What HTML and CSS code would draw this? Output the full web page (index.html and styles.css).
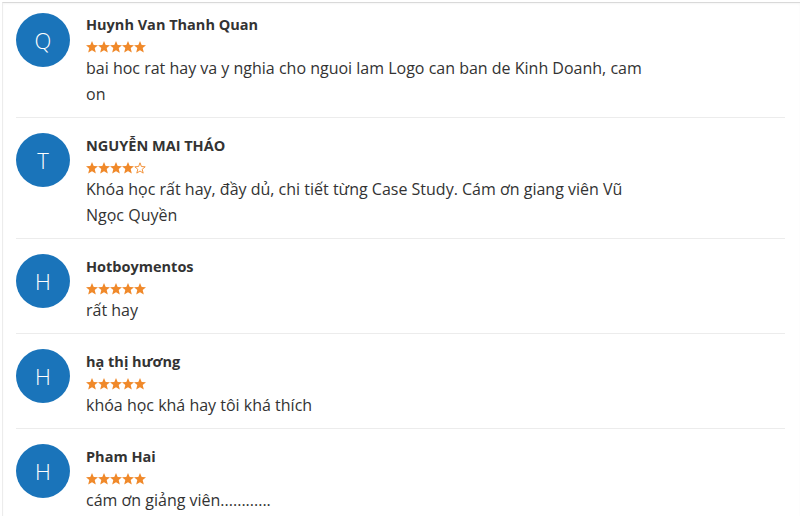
FILE: index.html
```html
<!DOCTYPE html>
<html lang="vi">
<head>
<meta charset="utf-8">
<title>Đánh giá</title>
<link rel="stylesheet" href="styles.css">
</head>
<body>
<svg width="0" height="0" class="defs">
  <defs>
    <symbol id="star" viewBox="0 0 12 12"><polygon points="6,0 7.7,4 12,4.3 8.7,7.1 9.8,11.6 6,9.2 2.2,11.6 3.3,7.1 0,4.3 4.3,4" fill="#f0892a"/></symbol>
    <symbol id="star-o" viewBox="0 0 12 12"><polygon points="6,0.8 7.4,4.5 11.2,4.8 8.2,7.3 9.2,11.1 6,9 2.8,11.1 3.8,7.3 0.8,4.8 4.6,4.5" fill="none" stroke="#f0892a" stroke-width="0.9" stroke-linejoin="round"/></symbol>
  </defs>
</svg>
<div class="reviews">
  <div class="review">
    <div class="avatar">Q</div>
    <div class="body">
      <div class="name">Huynh Van Thanh Quan</div>
      <div class="stars"><svg><use href="#star"/></svg><svg><use href="#star"/></svg><svg><use href="#star"/></svg><svg><use href="#star"/></svg><svg><use href="#star"/></svg></div>
      <div class="text">bai hoc rat hay va y nghia cho nguoi lam Logo can ban de Kinh Doanh, cam on</div>
    </div>
  </div>
  <div class="review">
    <div class="avatar">T</div>
    <div class="body">
      <div class="name">NGUYỄN MAI THÁO</div>
      <div class="stars"><svg><use href="#star"/></svg><svg><use href="#star"/></svg><svg><use href="#star"/></svg><svg><use href="#star"/></svg><svg><use href="#star-o"/></svg></div>
      <div class="text">Khóa học rất hay, đầy dủ, chi tiết từng Case Study. Cám ơn giang viên Vũ Ngọc Quyền</div>
    </div>
  </div>
  <div class="review">
    <div class="avatar">H</div>
    <div class="body">
      <div class="name">Hotboymentos</div>
      <div class="stars"><svg><use href="#star"/></svg><svg><use href="#star"/></svg><svg><use href="#star"/></svg><svg><use href="#star"/></svg><svg><use href="#star"/></svg></div>
      <div class="text">rất hay</div>
    </div>
  </div>
  <div class="review">
    <div class="avatar">H</div>
    <div class="body">
      <div class="name">hạ thị hương</div>
      <div class="stars"><svg><use href="#star"/></svg><svg><use href="#star"/></svg><svg><use href="#star"/></svg><svg><use href="#star"/></svg><svg><use href="#star"/></svg></div>
      <div class="text">khóa học khá hay tôi khá thích</div>
    </div>
  </div>
  <div class="review">
    <div class="avatar">H</div>
    <div class="body">
      <div class="name">Pham Hai</div>
      <div class="stars"><svg><use href="#star"/></svg><svg><use href="#star"/></svg><svg><use href="#star"/></svg><svg><use href="#star"/></svg><svg><use href="#star"/></svg></div>
      <div class="text">cám ơn giảng viên............</div>
    </div>
  </div>
</div>
</body>
</html>
```
FILE: styles.css
```css
html, body {
  margin: 0;
  padding: 0;
  background: #fff;
}
body {
  font-family: "Open Sans", "Noto Sans", sans-serif;
  color: #333;
  overflow: hidden;
}
.defs {
  position: absolute;
  width: 0;
  height: 0;
}
.reviews {
  margin-top: 2px;
  border-top: 1px solid #d9d9d9;
  border-left: 1px solid #ececec;
  margin-left: 2px;
  box-shadow: inset 0 1px 2px rgba(0,0,0,0.04);
}
.review {
  display: flex;
  gap: 16px;
  margin: 0 15px 0 13px;
  padding: 18px 0 10px;
  border-bottom: 1px solid #ececec;
}
.review:first-child {
  padding-top: 12px;
}
.avatar {
  flex: 0 0 54px;
  width: 54px;
  height: 54px;
  margin-top: -3px;
  border-radius: 50%;
  background: #1a74ba;
  color: #fff;
  font-weight: 300;
  font-size: 22px;
  display: flex;
  align-items: center;
  justify-content: center;
}
.review:first-child .avatar {
  margin-top: -2px;
}
.body {
  flex: 1;
}
.name {
  font-weight: 700;
  font-size: 14.5px;
  line-height: 20px;
  color: #333;
}
.stars {
  height: 20px;
  box-sizing: border-box;
  padding-top: 6px;
  display: flex;
  align-items: flex-start;
}
.stars svg {
  width: 12px;
  height: 12px;
}
.text {
  font-size: 16px;
  line-height: 26px;
  max-width: 560px;
}
```
